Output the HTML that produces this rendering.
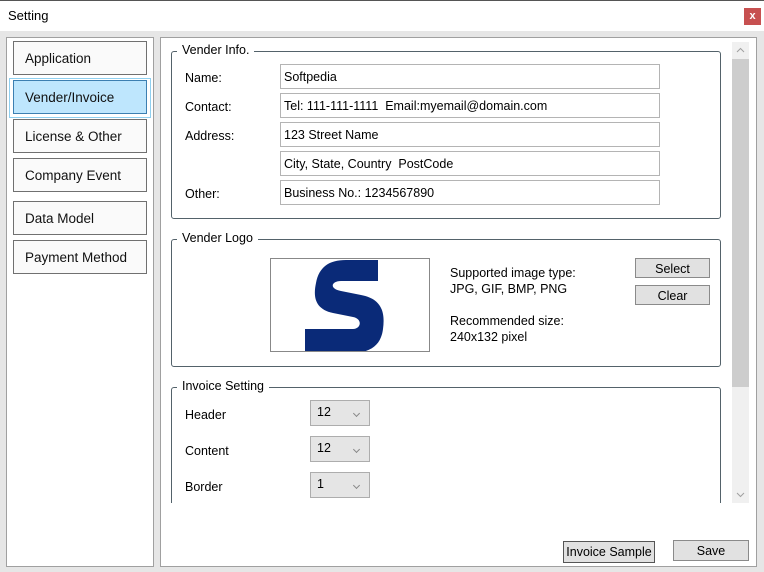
<!DOCTYPE html>
<html><head><style>
*{margin:0;padding:0;box-sizing:border-box}
body{width:764px;height:572px;background:#e6e6e6;font-family:"Liberation Sans",sans-serif;font-size:12.5px;color:#000;position:relative;overflow:hidden}
.a{position:absolute}
.nav{position:absolute;left:13px;width:134px;height:34px;background:#fafafa;border:1px solid #707070;padding:9px 0 0 11px;font-size:13.5px;color:#111}
.grp{position:absolute;left:171px;width:550px;border:1px solid #53626a;border-radius:3px}
.lg{position:absolute;background:#fff;padding:0 5px;left:5px;top:-9px;font-size:12.5px}
.tb{position:absolute;left:280px;width:380px;height:25px;border:1px solid #b4b4b4;background:#fff;padding:5px 0 0 3px}
.lb{position:absolute;left:185px}
.btn{position:absolute;background:#e1e1e1;border:1px solid #8a8a8a;text-align:center;padding-top:3px}
.cb{position:absolute;left:310px;width:60px;height:26px;background:#e5e5e5;border:1px solid #adadad;padding:4px 0 0 6px}
.cb:after{content:"";position:absolute;right:10px;top:10px;width:4px;height:4px;border-right:1px solid #888;border-bottom:1px solid #888;transform:rotate(45deg)}
</style></head><body>
<div class="a" style="left:0;top:0;width:764px;height:31px;background:#fff;border-top:1px solid #555"></div>
<div class="a" style="left:8px;top:8px;font-size:13px">Setting</div>
<div class="a" style="left:744px;top:8px;width:17px;height:17px;background:#c75050;color:#fff;font-size:11px;font-weight:bold;text-align:center;line-height:16px">x</div>

<div class="a" style="left:6px;top:37px;width:148px;height:530px;background:#fff;border:1px solid #a0a0a0"></div>
<div class="nav" style="top:41px">Application</div>
<div class="a" style="left:9px;top:78px;width:142px;height:40px;border:1px solid #8fd0f0"></div>
<div class="nav" style="top:80px;background:#bee6fd;border-color:#3c7fb1">Vender/Invoice</div>
<div class="nav" style="top:119px">License &amp; Other</div>
<div class="nav" style="top:158px">Company Event</div>
<div class="nav" style="top:201px">Data Model</div>
<div class="nav" style="top:240px">Payment Method</div>

<div class="a" style="left:160px;top:37px;width:597px;height:530px;background:#fff;border:1px solid #a0a0a0"></div>

<div class="grp" style="top:51px;height:168px"><span class="lg">Vender Info.</span></div>
<div class="lb" style="top:71px">Name:</div>
<div class="lb" style="top:100px">Contact:</div>
<div class="lb" style="top:129px">Address:</div>
<div class="lb" style="top:187px">Other:</div>
<div class="tb" style="top:64px">Softpedia</div>
<div class="tb" style="top:93px">Tel: 111-111-1111&nbsp; Email:myemail@domain.com</div>
<div class="tb" style="top:122px">123 Street Name</div>
<div class="tb" style="top:151px">City, State, Country&nbsp; PostCode</div>
<div class="tb" style="top:180px">Business No.: 1234567890</div>

<div class="grp" style="top:239px;height:128px"><span class="lg">Vender Logo</span></div>
<div class="a" style="left:270px;top:258px;width:160px;height:94px;border:1px solid #888;background:#fff;overflow:hidden">
<svg width="160" height="94" viewBox="0 0 160 94" style="position:absolute;left:0;top:0"><path d="M107 1 L107 22 L70 22 C60 22 58 30 70 32 L90 36 C112 40 114 55 112 70 C110 86 100 94 80 94 L34 94 L34 70 L82 70 C90 70 92 60 82 58 L62 54 C44 50 42 38 45 24 C48 8 58 1 75 1 Z" fill="#0a2a78"/></svg></div>
<div class="a" style="left:450px;top:265px;line-height:16px">Supported image type:<br>JPG, GIF, BMP, PNG<br><br>Recommended size:<br>240x132 pixel</div>
<div class="btn" style="left:635px;top:258px;width:75px;height:20px">Select</div>
<div class="btn" style="left:635px;top:285px;width:75px;height:20px">Clear</div>

<div class="grp" style="top:387px;height:140px"><span class="lg">Invoice Setting</span></div>
<div class="lb" style="top:408px">Header</div>
<div class="lb" style="top:444px">Content</div>
<div class="lb" style="top:480px">Border</div>
<div class="cb" style="top:400px">12</div>
<div class="cb" style="top:436px">12</div>
<div class="cb" style="top:472px">1</div>
<div class="a" style="left:161px;top:503px;width:595px;height:63px;background:#fff"></div>

<div class="a" style="left:732px;top:42px;width:17px;height:461px;background:#f0f0f0"></div>
<div class="a" style="left:732px;top:59px;width:17px;height:328px;background:#cdcdcd"></div>
<svg class="a" style="left:732px;top:42px" width="17" height="17"><path d="M5 10 L8.5 6.5 L12 10" fill="none" stroke="#a0a0a0"/></svg>
<svg class="a" style="left:732px;top:486px" width="17" height="17"><path d="M5 7 L8.5 10.5 L12 7" fill="none" stroke="#a0a0a0"/></svg>

<div class="btn" style="left:563px;top:541px;width:92px;height:22px;border-color:#555">Invoice Sample</div>
<div class="btn" style="left:673px;top:540px;width:76px;height:21px">Save</div>
</body></html>
